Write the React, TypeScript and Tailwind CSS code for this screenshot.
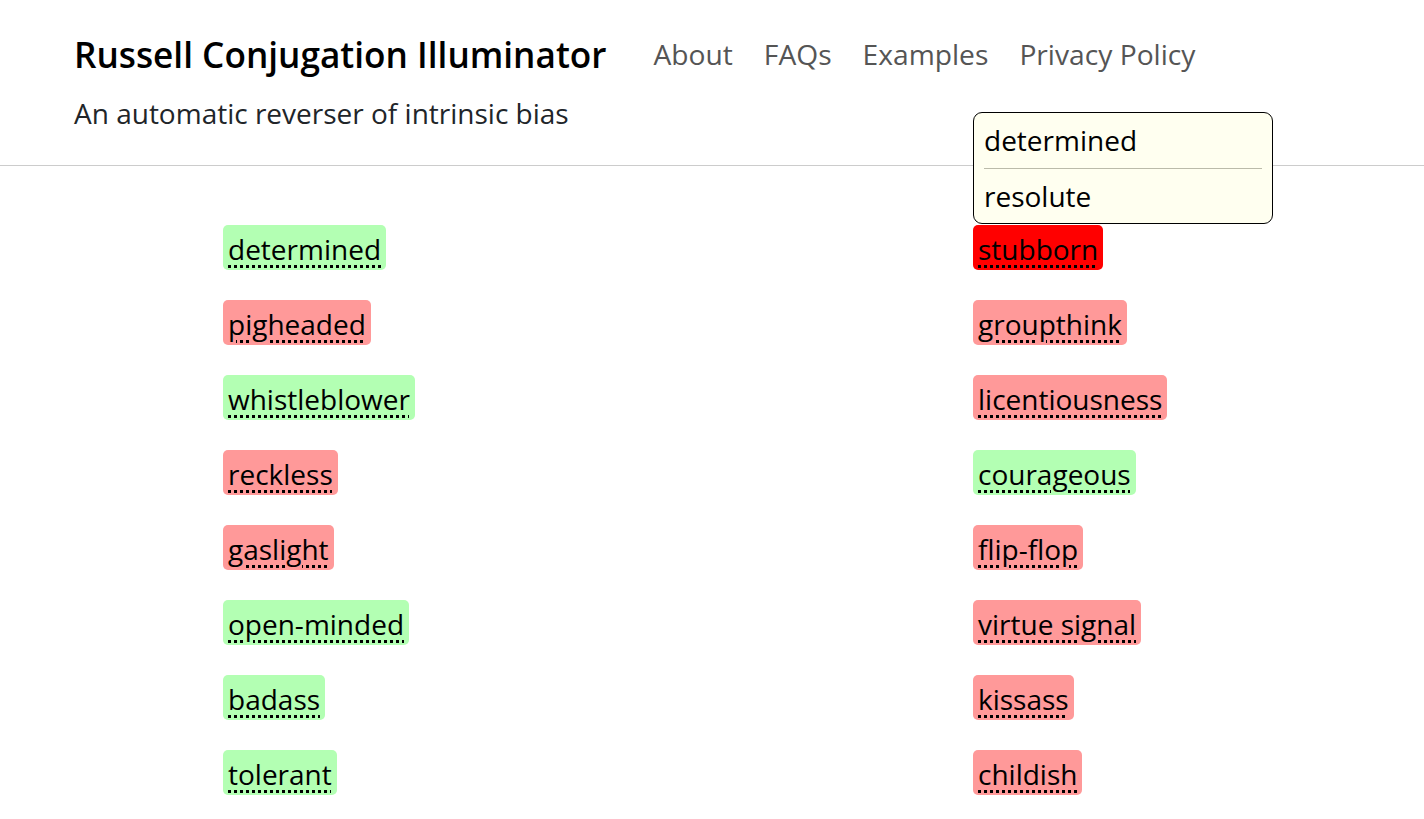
import React from "react";

const left = [
  { word: "determined", tone: "good" },
  { word: "pigheaded", tone: "bad" },
  { word: "whistleblower", tone: "good" },
  { word: "reckless", tone: "bad" },
  { word: "gaslight", tone: "bad" },
  { word: "open-minded", tone: "good" },
  { word: "badass", tone: "good" },
  { word: "tolerant", tone: "good" },
];

const right = [
  { word: "stubborn", tone: "active" },
  { word: "groupthink", tone: "bad" },
  { word: "licentiousness", tone: "bad" },
  { word: "courageous", tone: "good" },
  { word: "flip-flop", tone: "bad" },
  { word: "virtue signal", tone: "bad" },
  { word: "kissass", tone: "bad" },
  { word: "childish", tone: "bad" },
];

const toneClass: Record<string, string> = {
  good: "bg-[#b3ffb3]",
  bad: "bg-[#ff9999]",
  active: "bg-[#ff0000]",
};

function Word({ word, tone, children }: { word: string; tone: string; children?: React.ReactNode }) {
  return (
    <div className="relative h-[45px]">
      {children}
      <abbr
        title=""
        className={`inline-block h-[45px] rounded-[5px] px-[5px] leading-[49px] text-black underline decoration-dotted decoration-[3px] underline-offset-[5px] ${toneClass[tone]}`}
      >
        {word}
      </abbr>
    </div>
  );
}

export default function App() {
  return (
    <div className="min-h-screen bg-white font-['Open_Sans',sans-serif] text-[#212529]">
      {/* Header */}
      <header className="border-b border-[#cccccc] px-[74px] pt-[28px] pb-[32px]">
        <div className="flex h-[52px] items-center gap-[47px]">
          <h1 className="text-[35.2px] font-semibold leading-[52px] text-black">Russell Conjugation Illuminator</h1>
          <nav className="flex gap-[31px] text-[28.2px] leading-[52px] text-[#555555]">
            <a href="#">About</a>
            <a href="#">FAQs</a>
            <a href="#">Examples</a>
            <a href="#">Privacy Policy</a>
          </nav>
        </div>
        <p className="mt-[13px] text-[28px] leading-[40px]">An automatic reverser of intrinsic bias</p>
      </header>

      {/* Word list */}
      <main className="grid grid-cols-[750px_1fr] gap-y-[30px] pt-[59px] pl-[223px] text-[28px]">
        {left.map((l, i) => (
          <React.Fragment key={l.word}>
            <Word word={l.word} tone={l.tone} />
            <Word word={right[i].word} tone={right[i].tone}>
              {i === 0 && (
                <div className="absolute bottom-[46px] left-0 z-10 w-[300px] rounded-[9px] border border-black bg-[#fffff0] px-[10px] text-black">
                  <div className="border-b border-[#bbbbaa] leading-[55px]">determined</div>
                  <div className="leading-[54px]">resolute</div>
                </div>
              )}
            </Word>
          </React.Fragment>
        ))}
      </main>
    </div>
  );
}
